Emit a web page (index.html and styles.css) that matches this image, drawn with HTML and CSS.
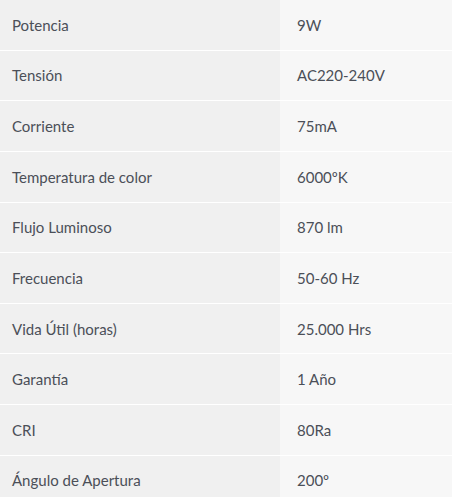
FILE: index.html
```html
<!DOCTYPE html>
<html lang="es">
<head>
<meta charset="utf-8">
<link rel="stylesheet" href="styles.css">
</head>
<body>
<table class="specs">
<tbody>
<tr><th>Potencia</th><td>9W</td></tr>
<tr><th>Tensión</th><td>AC220-240V</td></tr>
<tr><th>Corriente</th><td>75mA</td></tr>
<tr><th>Temperatura de color</th><td>6000ºK</td></tr>
<tr><th>Flujo Luminoso</th><td>870 lm</td></tr>
<tr><th>Frecuencia</th><td>50-60 Hz</td></tr>
<tr><th>Vida Útil (horas)</th><td>25.000 Hrs</td></tr>
<tr><th>Garantía</th><td>1 Año</td></tr>
<tr><th>CRI</th><td>80Ra</td></tr>
<tr><th>Ángulo de Apertura</th><td>200º</td></tr>
</tbody>
</table>
</body>
</html>
```
FILE: styles.css
```css
html, body {
  margin: 0;
  padding: 0;
  background: #ffffff;
}
.specs {
  width: 452px;
  border-collapse: collapse;
  font-family: Lato, "Open Sans", sans-serif;
  font-size: 15px;
  color: #4b4f58;
}
.specs th,
.specs td {
  height: 49.625px;
  padding: 0;
  text-align: left;
  font-weight: normal;
  vertical-align: middle;
  border-bottom: 1px solid #ffffff;
  line-height: 20px;
}
.specs th {
  width: 268px;
  padding-left: 12px;
  background: #f0f0f0;
}
.specs td {
  padding-left: 17px;
  background: #f7f7f7;
}
```
